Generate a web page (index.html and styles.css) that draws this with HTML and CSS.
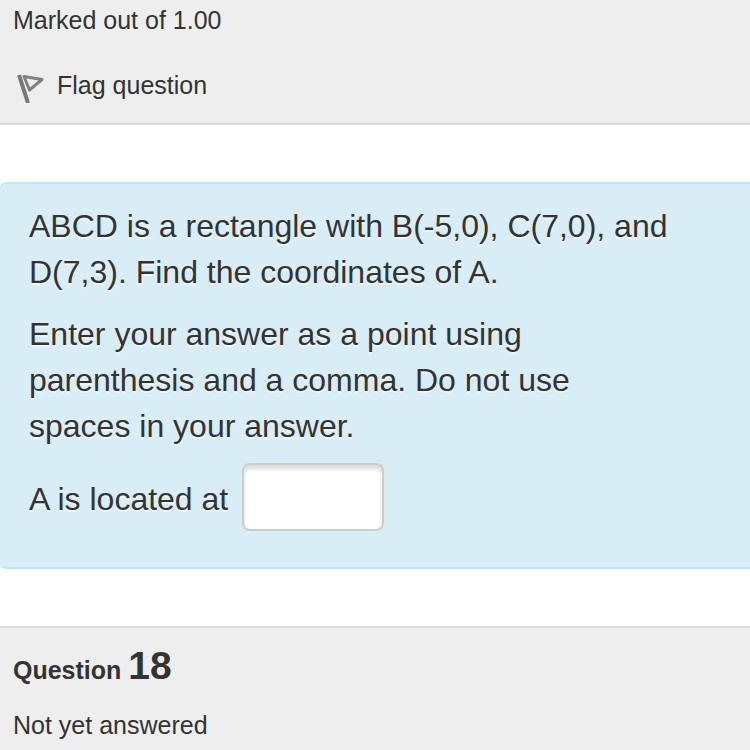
FILE: index.html
```html
<!DOCTYPE html>
<html lang="en">
<head>
<meta charset="utf-8">
<meta name="viewport" content="width=device-width, initial-scale=1">
<title>Quiz</title>
<link rel="stylesheet" href="styles.css">
</head>
<body>
<main>
  <section class="info info-first">
    <p class="grade">Marked out of 1.00</p>
    <button class="flag" type="button">
      <svg class="flag-icon" viewBox="0 0 32 36" aria-hidden="true">
        <path d="M6 8 15 36" fill="none" stroke="#777" stroke-width="4"/>
        <path d="M11 9.500 29 12.500 16.500 23Z" fill="none" stroke="#808080" stroke-width="3" stroke-linejoin="round"/>
      </svg>
      <span>Flag question</span>
    </button>
  </section>
  <section class="formulation">
    <p>ABCD is a rectangle with B(-5,0), C(7,0), and D(7,3). Find the coordinates of A.</p>
    <p class="narrow">Enter your answer as a point using parenthesis and a comma. Do not use spaces in your answer.</p>
    <div class="answer">
      <label for="answer">A is located at</label>
      <input id="answer" type="text">
    </div>
  </section>
  <section class="info info-next">
    <h2>Question <span class="number">18</span></h2>
    <p class="state">Not yet answered</p>
  </section>
</main>
</body>
</html>
```
FILE: styles.css
```css
* {
  box-sizing: border-box;
}

body {
  margin: 0;
  background: #fff;
  color: #333;
  font-family: "Liberation Sans", Arial, sans-serif;
  font-size: 25px;
  overflow-x: hidden;
}

p,
h2 {
  margin: 0;
}

.info {
  background: #eee;
  border: 0 solid #dcdcdc;
  padding: 0 13px;
  line-height: 40px;
}

.info-first {
  border-bottom-width: 2px;
  padding-bottom: 18px;
}

.flag {
  display: flex;
  align-items: center;
  gap: 12px;
  margin-top: 25px;
  padding: 0;
  border: 0;
  background: none;
  color: inherit;
  font: inherit;
  line-height: 40px;
}

.flag-icon {
  width: 32px;
  height: 36px;
}

.formulation {
  margin: 57px 0;
  padding: 19px 29px 36px;
  border: 2px solid #bce8f1;
  border-width: 2px 0;
  border-radius: 6px 0 0 6px;
  background: #d9edf7;
  font-size: 32px;
  line-height: 46px;
  text-shadow: 0 2px 0 rgba(255, 255, 255, 0.5);
}

.formulation p {
  margin-bottom: 16px;
}

.formulation .narrow {
  max-width: 600px;
  margin-bottom: 14px;
}

.answer {
  display: flex;
  align-items: center;
  gap: 14px;
}

.answer label {
  padding-top: 4px;
}

.answer input {
  width: 142px;
  height: 68px;
  padding: 8px 12px;
  border: 2px solid #ccc;
  border-radius: 8px;
  background: #fff;
  box-shadow: inset 0 4px 4px rgba(0, 0, 0, 0.14);
  color: #555;
  font: inherit;
}

.info-next {
  border-top-width: 2px;
  padding-bottom: 8px;
}

h2 {
  padding-top: 13px;
  font-size: 25px;
  line-height: 50px;
}

.number {
  font-size: 39px;
}

.state {
  margin-top: 10px;
}
```
